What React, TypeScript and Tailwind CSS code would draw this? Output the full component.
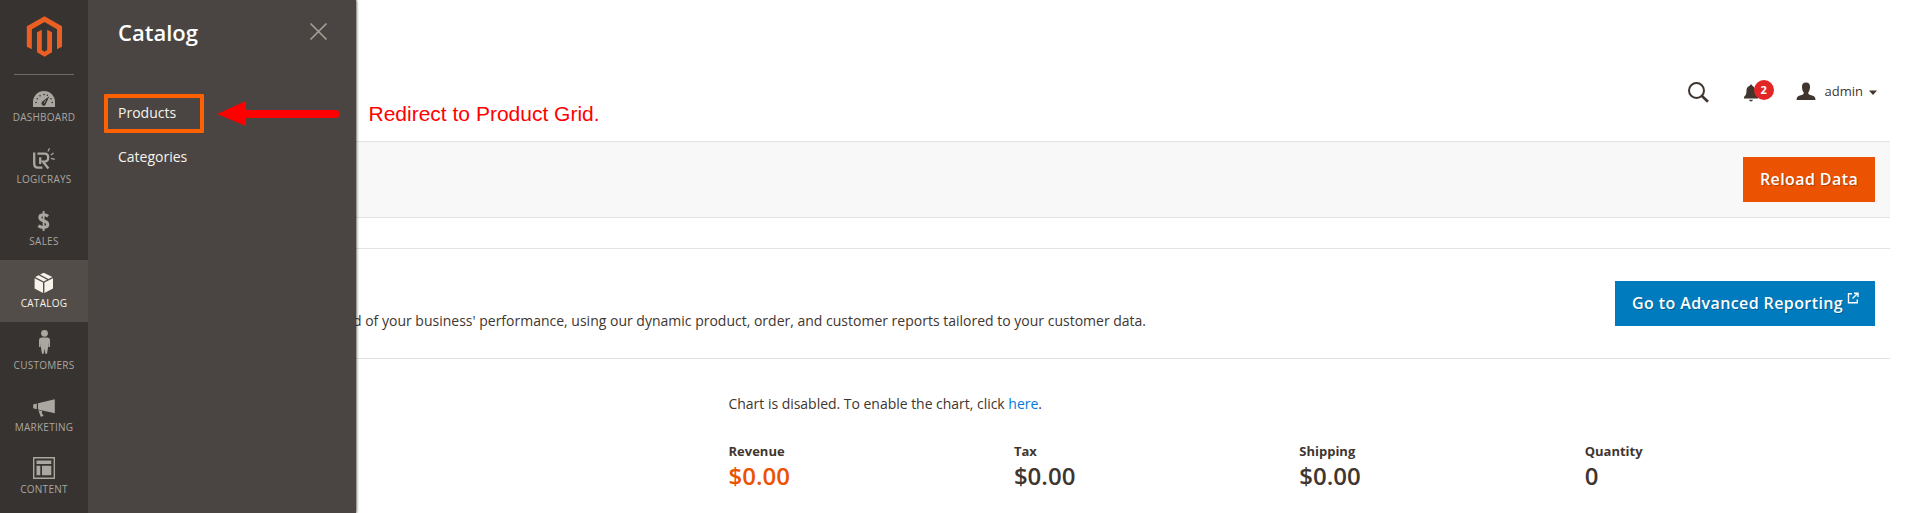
import type { ReactNode } from "react";

type NavItem = { label: string; active?: boolean; icon: ReactNode };

const navItems: NavItem[] = [
  {
    label: "Dashboard",
    icon: (
      <>
        <path d="M33 33V28A11 11 0 0 1 55 28V33Z" />
        <g fill="#373330">
          <circle cx="36" cy="28.5" r="0.8" />
          <circle cx="37.3" cy="24.8" r="0.8" />
          <circle cx="40" cy="21.8" r="0.8" />
          <circle cx="44" cy="20.5" r="0.8" />
          <circle cx="47.3" cy="21.3" r="0.8" />
          <circle cx="51" cy="24.8" r="0.8" />
          <circle cx="52.2" cy="28.5" r="0.8" />
          <path d="M49.3 22.2L46 29.6A2.3 2.3 0 1 1 42.3 27.6Z" />
        </g>
        <path d="M45.6 26.2L44 29.3" stroke="currentColor" strokeWidth="0.7" />
      </>
    ),
  },
  {
    label: "LogicRays",
    icon: (
      <g fill="none" stroke="currentColor" strokeWidth="2.3">
        <path d="M34.2 16.5V27.5Q34.2 31.6 38 31.6H42.4" />
        <path d="M37.4 17.6H44.5Q48.2 17.6 48.2 21.5T44.5 25.6H43L48.4 32.5" />
        <path d="M40.2 21.3V28" />
        <path
          d="M49.5 12.2L47.9 15.4M53.6 16.9L50.8 19M51 22.4L54.8 23.3"
          strokeWidth="1.2"
        />
      </g>
    ),
  },
  {
    label: "Sales",
    icon: (
      <g fill="none" stroke="currentColor">
        <path
          d="M48.1 18.2Q46.3 16.8 43.7 16.8Q39.8 16.8 39.8 19.5Q39.8 21.7 43.5 22.8Q47.8 24 47.8 26.6Q47.8 29.4 43.5 29.4Q40.5 29.4 38.4 27.8"
          strokeWidth="3"
        />
        <path d="M43.6 13V33" strokeWidth="1.9" />
      </g>
    ),
  },
  {
    label: "Catalog",
    active: true,
    icon: (
      <>
        <path d="M34.6 18.2L43 22.5V33L34.6 28.6Z" />
        <path d="M44.4 22.5L53 18.2V28.6L44.4 33Z" />
        <path d="M35.2 17L38.6 15.2L47 19.8L43.7 21.4Z" />
        <path d="M40 14.5L43.7 12.7L52.4 17L48.4 19Z" />
      </>
    ),
  },
  {
    label: "Customers",
    icon: (
      <>
        <circle cx="44.5" cy="11.3" r="3.4" />
        <path d="M41.5 15.4H47.5Q50 15.6 50 18V25H48.4V20.3L48 26L47 31.7H45.3L44.5 26.8L43.7 31.7H42L41 26L40.6 20.3V25H39V18Q39 15.6 41.5 15.4Z" />
      </>
    ),
  },
  {
    label: "Marketing",
    icon: (
      <>
        <path d="M54.8 15.2V29.2L38 25.6V19.2Z" />
        <path d="M33.2 20.4L36.8 19.6V25.2L33.2 24.3Z" />
        <path d="M38.4 26.3L42.3 27.1L41.7 29L43.7 32L40.7 32.8Z" />
      </>
    ),
  },
  {
    label: "Content",
    icon: (
      <>
        <path
          d="M33.7 11.7H54.3V32.3H33.7Z"
          fill="none"
          stroke="currentColor"
          strokeWidth="1.4"
        />
        <path d="M36.5 14.5H51.3V18H36.5ZM36.5 19.8H40.3V29.3H36.5ZM42 19.8H51.3V29.3H42Z" />
      </>
    ),
  },
];

const totals = [
  { label: "Revenue", value: "$0.00", color: "text-[#eb5202]" },
  { label: "Tax", value: "$0.00", color: "text-[#41362f]" },
  { label: "Shipping", value: "$0.00", color: "text-[#41362f]" },
  { label: "Quantity", value: "0", color: "text-[#41362f]" },
];

function Sidebar() {
  return (
    <nav className="relative z-20 flex w-[88px] shrink-0 flex-col bg-[#373330]">
      <div className="h-[74px] shrink-0">
        <svg width="88" height="74" viewBox="0 0 264 222" fill="#eb5f25">
          <path d="M133.5 49L186 79V140L171 148V88L133.5 66L95.5 88V148L80.5 140V79Z" />
          <path d="M111 97L125.5 89V150L133.5 155L141.5 150V89L156 97V157L133.5 170.5L111 157Z" />
        </svg>
      </div>
      {navItems.map((item, i) => (
        <div
          key={item.label}
          className={
            item.active
              ? "h-[62px] shrink-0 bg-[#524d49] text-[#f7f3eb]"
              : "h-[62px] shrink-0 text-[#aaa6a0]"
          }
        >
          <svg
            className="block"
            width="88"
            height="36"
            viewBox="0 0 88 36"
            fill="currentColor"
          >
            {i === 0 && <path d="M14 0H74V1H14Z" fill="#736963" />}
            {item.icon}
          </svg>
          <div className="text-center text-[10px] leading-[14px] tracking-[0.025em] uppercase">
            {item.label}
          </div>
        </div>
      ))}
    </nav>
  );
}

function CatalogMenu() {
  return (
    <aside className="relative z-10 w-[268px] shrink-0 bg-[#4a4542] shadow-[0_0_3px_#000]">
      <div className="flex h-[64px] items-center justify-between pr-[27px] pl-[30px]">
        <h2 className="text-[22px] leading-[30px] font-semibold text-white">
          Catalog
        </h2>
        <svg
          className="mb-px"
          width="20"
          height="20"
          viewBox="0 0 20 20"
          stroke="#a79d95"
          strokeWidth="1.7"
        >
          <path d="M1.5 1.5L17.5 17.5M17.5 1.5L1.5 17.5" />
        </svg>
      </div>
      <ul className="flex flex-col gap-6 pt-[39px] pl-[30px] text-[14px] leading-5 text-[#f7f3eb]">
        <li>Products</li>
        <li>Categories</li>
      </ul>
      <div className="absolute top-[94px] left-[16px] h-[39px] w-[100px] rounded-[1px] border-4 border-[#ff6000]" />
      <svg
        className="absolute top-[100px] left-[128px]"
        width="126"
        height="28"
        viewBox="0 0 126 28"
        fill="#ff0000"
      >
        <path d="M1 14L30 1V10H119.5A4 4 0 0 1 119.5 18H30V26Z" />
      </svg>
    </aside>
  );
}

function Header() {
  return (
    <header className="flex h-[141px] shrink-0 items-start pl-[12.5px]">
      <p className="mt-[102px] font-['Liberation_Sans',sans-serif] text-[21px] leading-6 text-[#ff0000]">
        Redirect to Product Grid.
      </p>
      <div className="mt-[79px] ml-auto flex h-6 items-center pr-[13.5px]">
        <svg width="24" height="24" viewBox="0 0 24 24" fill="none" stroke="#41362f">
          <circle cx="10.5" cy="11.5" r="7.5" strokeWidth="2" />
          <path d="M15.7 16.7L22 22.8" strokeWidth="2.6" />
        </svg>
        <div className="relative ml-[31px] h-6 w-5">
          <svg width="20" height="24" viewBox="0 0 20 24" fill="#41362f">
            <path d="M10 5.5Q11.2 5.5 11.2 6.8Q14 8 14 11.5Q14 15.5 17 18V19.5H3V18Q5.5 16 5.5 11.5Q5.5 8 8.8 6.8Q8.8 5.5 10 5.5ZM8 20.7H12Q11.5 22.5 10 22.5T8 20.7Z" />
          </svg>
          <span className="absolute top-px left-[13px] flex h-5 w-5 items-center justify-center rounded-full bg-[#e22626] text-[11px] font-bold text-white">
            2
          </span>
        </div>
        <svg className="ml-[35px]" width="20" height="24" viewBox="0 0 20 24" fill="#41362f">
          <path d="M10 3.5C12.9 3.5 14.2 5.3 14 8.5C13.9 11 12.8 12.7 12.3 13.6V14.8Q13 16 16 16.5Q19.5 17.4 19.5 21H.5Q.5 17.4 4 16.5Q7 16 7.7 14.8V13.6C7.2 12.7 6.1 11 6 8.5C5.8 5.3 7.1 3.5 10 3.5Z" />
        </svg>
        <span className="ml-[9px] text-[13px] leading-5 text-[#41362f]">admin</span>
        <svg className="ml-[5.5px]" width="8" height="24" viewBox="0 0 8 24" fill="#41362f">
          <path d="M0 11.5H8L4 16Z" />
        </svg>
      </div>
    </header>
  );
}

const buttonClass =
  "flex h-[45px] items-center text-[16px] leading-6 font-semibold tracking-[0.025em] whitespace-nowrap text-white pl-[17px] pb-[2px] [text-shadow:1px_1px_0_rgba(0,0,0,0.25)]";

export default function App() {
  return (
    <div className="flex h-[513px] w-full overflow-hidden bg-white font-['Open_Sans',sans-serif] text-[#41362f]">
      <Sidebar />
      <CatalogMenu />
      <main className="mr-6 flex min-w-0 flex-1 flex-col">
        <Header />
        <section className="flex h-[77px] shrink-0 items-center justify-end border-y border-[#e3e3e3] bg-[#f8f8f8] pr-[15px]">
          <button className={`${buttonClass} w-[132px] bg-[#eb5202]`}>Reload Data</button>
        </section>
        <section className="mt-[30px] flex h-[111px] shrink-0 items-start justify-between border-y border-[#e3e3e3] pr-[15px]">
          <p className="mt-[62px] -ml-[3px] text-[14px] leading-5 whitespace-nowrap">
            d of your business' performance, using our dynamic product, order, and
            customer reports tailored to your customer data.
          </p>
          <button className={`${buttonClass} mt-[32px] w-[260px] bg-[#007bbd]`}>
            Go to Advanced Reporting
            <svg
              className="mb-[10px] ml-[3.5px]"
              width="12"
              height="12"
              viewBox="0 0 12 12"
              fill="none"
              stroke="white"
              strokeWidth="1.4"
            >
              <path d="M5 1.7H1.5V10.8H10.3V7.5M5.5 6.5L10 2M7 1.2H11V5" />
            </svg>
          </button>
        </section>
        <section className="pt-[35px] pl-[372.5px]">
          <p className="text-[14px] leading-5 tracking-[-0.025px]">
            Chart is disabled. To enable the chart, click{" "}
            <a className="text-[#007bdb]">here</a>.
          </p>
          <div className="mt-[28px] flex">
            {totals.map((t) => (
              <div key={t.label} className="w-[285.4px] shrink-0">
                <div className="text-[13px] leading-[18px] font-bold">{t.label}</div>
                <div className={`text-[24px] leading-8 font-semibold ${t.color}`}>
                  {t.value}
                </div>
              </div>
            ))}
          </div>
        </section>
      </main>
    </div>
  );
}
